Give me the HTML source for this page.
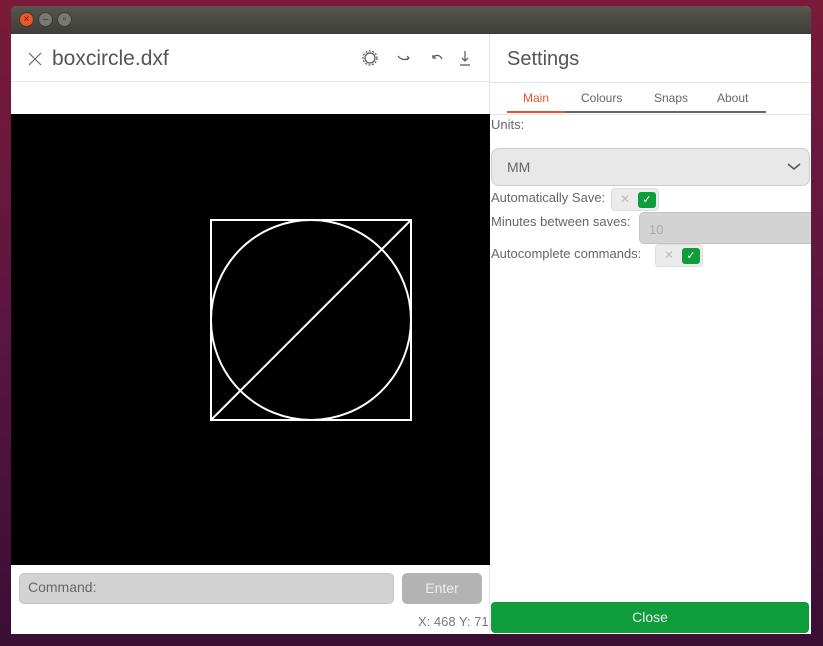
<!DOCTYPE html>
<html><head><style>
*{margin:0;padding:0;box-sizing:border-box}
body{width:823px;height:646px;overflow:hidden;background:linear-gradient(180deg,#7a1a38 0%,#5a1640 50%,#3a0e35 100%);font-family:"Liberation Sans",sans-serif;position:relative}
.win{position:absolute;left:11px;top:6px;width:800px;height:628px;background:#fff;border-radius:6px 6px 0 0;overflow:hidden}
.tb{position:absolute;left:0;top:0;width:800px;height:28px;background:linear-gradient(#58554e,#3f3d39)}
.b{position:absolute;top:6px;width:15px;height:15px;border-radius:50%;background:#7a7872;border:1px solid #3a3834;font-size:10px;line-height:13px;text-align:center;color:#333}
.abs{position:absolute}
</style></head><body>
<div class="win">
<div class="tb">
<div class="b" style="left:8px;background:#e9572a;color:#5a1a0a">×</div>
<div class="b" style="left:27px">–</div>
<div class="b" style="left:46px">▫</div>
</div>
<svg class="abs" style="left:17px;top:46px" width="14" height="14"><path d="M1 1 L13 13 M13 1 L1 13" stroke="#666" stroke-width="1.2"/></svg>
<div class="abs" style="left:41px;top:41px;font-size:21px;color:#555">boxcircle.dxf</div>
<svg class="abs" style="left:348px;top:42px" width="120" height="22" viewBox="0 0 120 22" fill="none" stroke="#555" stroke-width="1.2">
<circle cx="11" cy="10" r="5"/><circle cx="11" cy="10" r="7" stroke-dasharray="2 1.5"/>
<path d="M39 8 q5 6 11 2 M48 8 l2 2 l-2 2"/>
<path d="M83 11 q-3 -6 -9 -2 M74 7 l0 3 l3 0"/>
<path d="M106 3 v10 M103 10 l3 3 l3-3 M101 17 h10"/>
</svg>
<div class="abs" style="left:0;top:75px;width:479px;height:1px;background:#e5e5e5"></div>
<div class="abs" style="left:478px;top:28px;width:1px;height:600px;background:#e5e5e5"></div>
<div class="abs" style="left:0;top:108px;width:479px;height:451px;background:#000"></div>
<svg class="abs" style="left:0;top:108px" width="479" height="451">
<g stroke="#fff" stroke-width="2" fill="none">
<rect x="200" y="106" width="200" height="200"/>
<circle cx="300" cy="206" r="100"/>
<line x1="200" y1="306" x2="400" y2="106"/>
</g></svg>
<div class="abs" style="left:8px;top:567px;width:375px;height:31px;background:#d3d3d3;border:1px solid #c4c4c4;border-radius:5px;font-size:14px;color:#666;padding:5px 8px">Command:</div>
<div class="abs" style="left:391px;top:567px;width:80px;height:31px;background:#b3b3b3;border-radius:5px;font-size:14px;color:#eee;text-align:center;line-height:31px">Enter</div>
<div class="abs" style="left:407px;top:608px;font-size:13px;color:#777">X: 468 Y: 71</div>
<div class="abs" style="left:496px;top:42px;font-size:20px;color:#555">Settings</div>
<div class="abs" style="left:479px;top:76px;width:321px;height:1px;background:#e5e5e5"></div>
<div class="abs" style="left:496px;top:85px;width:259px;font-size:12px;color:#666">
<span class="abs" style="left:16px;color:#e0562b">Main</span>
<span class="abs" style="left:74px">Colours</span>
<span class="abs" style="left:147px">Snaps</span>
<span class="abs" style="left:210px">About</span>
</div>
<div class="abs" style="left:496px;top:105px;width:259px;height:2px;background:#666"></div>
<div class="abs" style="left:496px;top:105px;width:58px;height:2px;background:#e0562b"></div>
<div class="abs" style="left:479px;top:108px;width:321px;height:1px;background:#e5e5e5"></div>
<div class="abs" style="left:480px;top:111px;font-size:13px;color:#666">Units:</div>
<div class="abs" style="left:480px;top:142px;width:319px;height:38px;background:#e8e8e8;border:1px solid #ccc;border-radius:8px;font-size:14px;color:#666;padding:10px 15px">MM
<svg class="abs" style="right:8px;top:14px" width="14" height="8"><path d="M1 1 l6 5 l6-5" stroke="#555" stroke-width="1.5" fill="none"/></svg></div>
<div class="abs" style="left:480px;top:184px;font-size:13px;color:#666">Automatically Save:</div>
<div class="abs" style="left:600px;top:182px;width:48px;height:23px;background:#ebebeb;border:1px solid #ddd;border-radius:4px"><span class="abs" style="left:8px;top:3px;font-size:12px;color:#bbb">✕</span><div class="abs" style="left:26px;top:3px;width:18px;height:16px;background:#0e9d3a;border-radius:3px;color:#fff;font-size:11px;text-align:center;line-height:16px">✓</div></div>
<div class="abs" style="left:480px;top:208px;font-size:13px;color:#666">Minutes between saves:</div>
<div class="abs" style="left:628px;top:206px;width:180px;height:32px;background:#d3d3d3;border:1px solid #c4c4c4;border-radius:5px;font-size:13px;color:#aaa;padding:9px 9px">10</div>
<div class="abs" style="left:480px;top:240px;font-size:13px;color:#666">Autocomplete commands:</div>
<div class="abs" style="left:644px;top:238px;width:48px;height:23px;background:#ebebeb;border:1px solid #ddd;border-radius:4px"><span class="abs" style="left:8px;top:3px;font-size:12px;color:#bbb">✕</span><div class="abs" style="left:26px;top:3px;width:18px;height:16px;background:#0e9d3a;border-radius:3px;color:#fff;font-size:11px;text-align:center;line-height:16px">✓</div></div>
<div class="abs" style="left:480px;top:596px;width:318px;height:31px;background:#0e9d3a;border-radius:4px;color:#eee;font-size:14px;text-align:center;line-height:31px">Close</div>
</div>
</body></html>
